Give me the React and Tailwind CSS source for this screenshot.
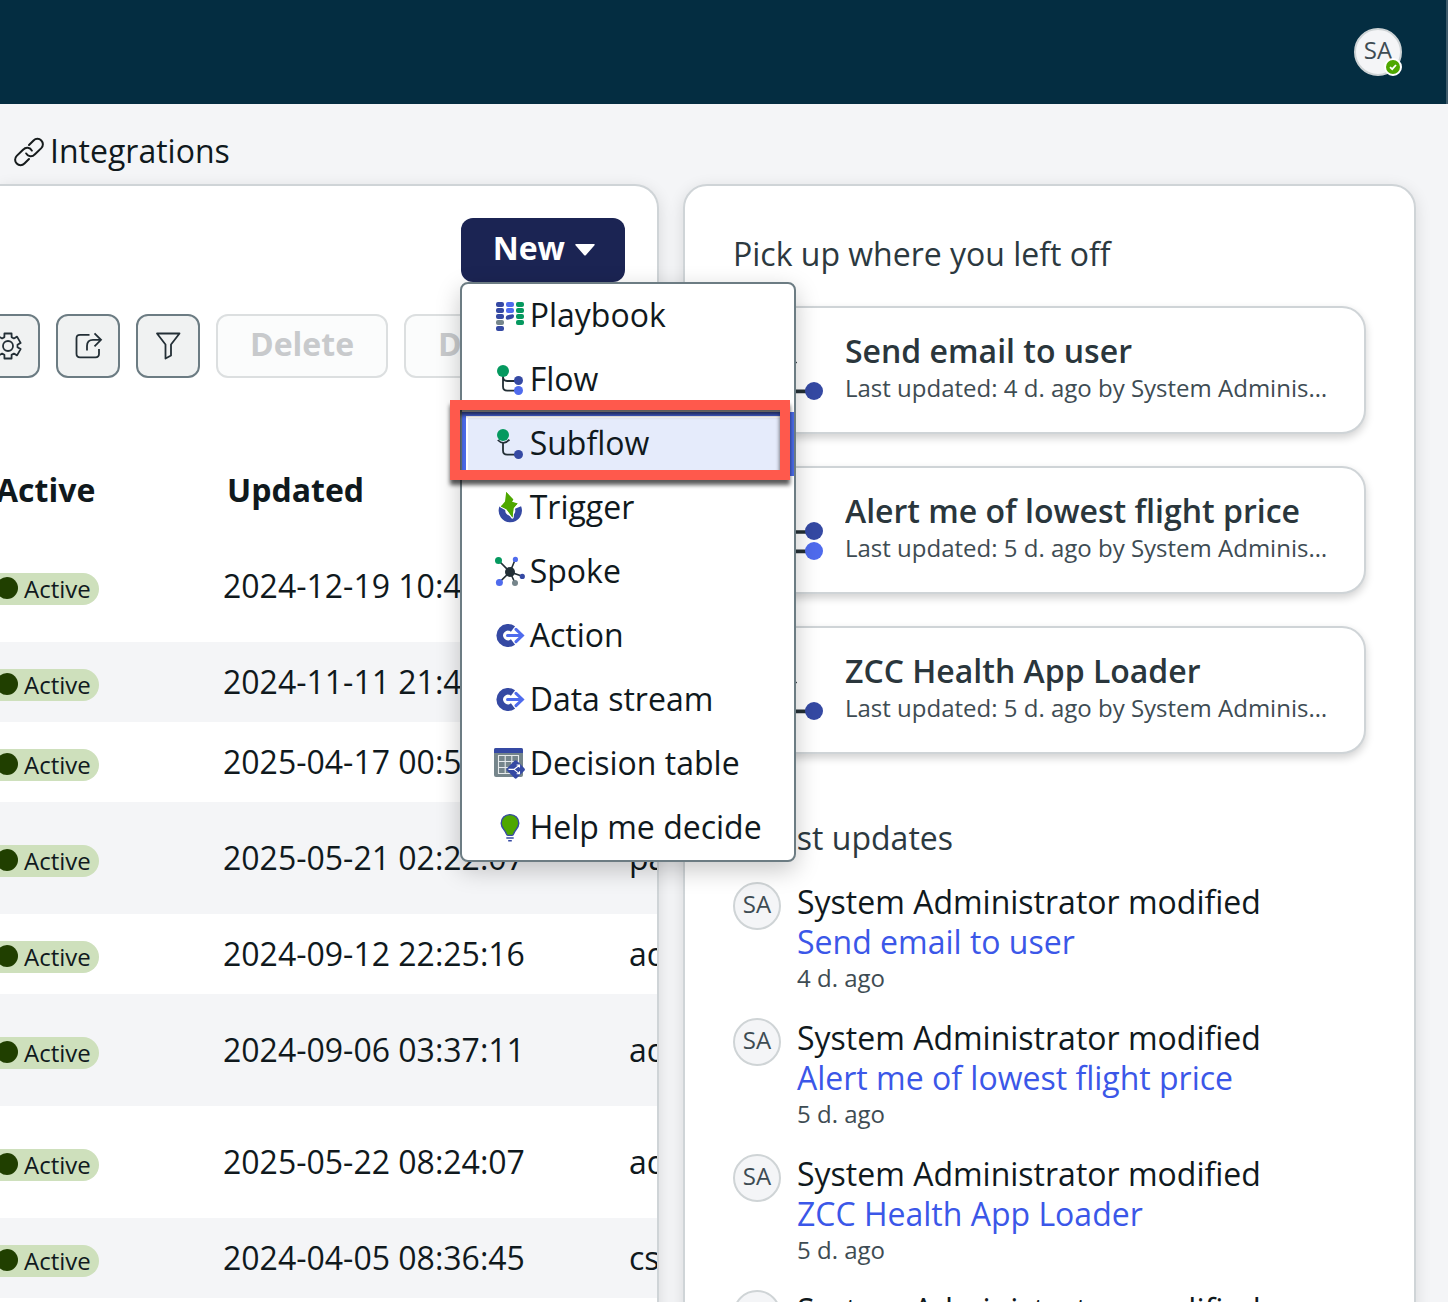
import React from "react";

const NAVY = "#3549a3";
const BLUE = "#4f6bed";
const GREEN = "#05995f";
const LIME = "#4ea700";
const INK = "#232f36";
const GRAY = "#75858b";

function Icon({ children, className = "size-8" }) {
  return (
    <svg viewBox="0 0 32 32" fill="none" className={`${className} shrink-0 overflow-visible`} aria-hidden="true">
      {children}
    </svg>
  );
}

function PlaybookIcon() {
  const dots = [
    [2, 2, NAVY], [2, 8, NAVY], [2, 14, NAVY], [2, 20, GRAY], [2, 26, NAVY],
    [12, 2, BLUE], [12, 8, BLUE],
    [22, 2, GREEN], [22, 8, GREEN], [22, 14, GREEN], [22, 20, GREEN],
  ];
  return (
    <Icon>
      {dots.map(([x, y, c]) => (
        <rect key={`${x}-${y}`} x={x} y={y} width="8" height="5" rx="2" fill={c} />
      ))}
      <path d="M13.5 15.2 L18.6 14.2 Q20.2 14.2 20 16.2 Q19.8 18.2 17.8 18.8 L13.5 19.8 Q11.4 19.6 11.8 17.4 Q12 15.6 13.5 15.2 Z" fill={NAVY} />
    </Icon>
  );
}

function FlowIcon({ className }) {
  return (
    <Icon className={className}>
      <path d="M9 12 V22.5 Q9 26.7 13.2 26.7 H22 M9 12.5 Q9 17 13.2 17 H22" stroke={INK} strokeWidth="1.8" />
      <circle cx="9" cy="7" r="6" fill={GREEN} />
      <circle cx="24.5" cy="16.5" r="4.5" fill={NAVY} />
      <circle cx="24.5" cy="26.5" r="4.5" fill={BLUE} />
    </Icon>
  );
}

function SubflowIcon({ className }) {
  return (
    <Icon className={className}>
      <path d="M9 15 V22.5 Q9 26.7 13.2 26.7 H22 M3.8 12 Q9.5 18 15.4 11.6" stroke={INK} strokeWidth="1.8" />
      <circle cx="9" cy="7" r="6" fill={GREEN} />
      <circle cx="24.5" cy="26.5" r="4.5" fill={NAVY} />
    </Icon>
  );
}

function TriggerIcon() {
  return (
    <Icon>
      <path d="M8.6 15.6 A8.3 8.3 0 1 0 24 15.6" stroke={NAVY} strokeWidth="6.6" />
      <path
        d="M12.2 0 L19.2 7.6 L17.4 11 L23.6 11.4 L19.4 16.4 L18.4 25.4 L12.6 17.4 L6.8 14.2 L12 11 Z"
        fill={LIME}
        stroke="#fff"
        strokeWidth="2.6"
        strokeLinejoin="round"
        paintOrder="stroke"
      />
      <path d="M12.2 0 L19.4 7.6 L17.6 9.4 L23.6 11.4 L19.6 15.6 L18.6 25.6 L12.6 17 L6.8 14.4 L11 9.6 Z" fill={LIME} />
    </Icon>
  );
}

function SpokeIcon() {
  return (
    <Icon>
      <path d="M4.3 4.3 L16 16 L21.3 3.3 M28.3 20.3 L16 16 L5.3 26.3 M16 16 L21 27" stroke={INK} strokeWidth="1.6" />
      <circle cx="16" cy="16" r="5" fill={INK} />
      <circle cx="4.5" cy="4.5" r="3.5" fill={GREEN} />
      <circle cx="21.4" cy="3.4" r="2.6" fill={BLUE} />
      <circle cx="28.3" cy="20.4" r="2.6" fill={NAVY} />
      <circle cx="5.4" cy="26.4" r="3.5" fill={BLUE} />
      <circle cx="21" cy="27" r="3" fill={GRAY} />
    </Icon>
  );
}

function ActionIcon() {
  return (
    <Icon>
      <path d="M19 9 A8.2 8.2 0 1 0 19 22" stroke={NAVY} strokeWidth="6.8" />
      <path d="M14 15.5 H29" stroke="#fff" strokeWidth="4.6" />
      <path d="M22 8.6 L29.2 15.5 L22 22.4" stroke="#fff" strokeWidth="4.4" />
      <path d="M13.5 15.5 H28 M22 9.4 L28.4 15.5 L22 21.6" stroke={BLUE} strokeWidth="3" strokeLinecap="round" />
    </Icon>
  );
}

function DecisionIcon() {
  return (
    <Icon>
      <rect width="29" height="29" rx="2" fill={GRAY} />
      <path d="M2 0 H27 Q29 0 29 2 V5 H0 V2 Q0 0 2 0 Z" fill={NAVY} />
      <path d="M4.5 7.5 H24.5 V25.5 H4.5 Z M11.2 7.5 V25.5 M17.8 7.5 V25.5 M4.5 13.5 H24.5 M4.5 19.5 H24.5" stroke="#e6eaec" strokeWidth="1.1" />
      <rect x="14.7" y="14.4" width="14" height="14" rx="1.8" transform="rotate(45 21.7 21.4)" fill={NAVY} />
      <path d="M14.5 21.4 H20 L25.3 17.2 M20 21.4 L25.3 25.6 M22.6 17 H25.5 V19.6 M22.6 25.8 H25.5 V23.2" stroke="#fff" strokeWidth="1.1" />
    </Icon>
  );
}

function BulbIcon() {
  return (
    <Icon>
      <path
        d="M16 2.6 C10.8 2.6 7.2 6.4 7.2 11.2 C7.2 16 11 17.8 12.2 21.6 Q12.8 23.4 14 23.4 H18 Q19.2 23.4 19.8 21.6 C21 17.8 24.8 16 24.8 11.2 C24.8 6.4 21.2 2.6 16 2.6 Z"
        fill={LIME}
        stroke={NAVY}
        strokeWidth="1.4"
      />
      <path d="M12.3 26 H19.7 M14.2 28.8 H17.8" stroke={NAVY} strokeWidth="1.5" />
    </Icon>
  );
}

function LinkIcon() {
  return (
    <svg viewBox="1.5 1.5 21 21" fill="none" stroke="#161b1c" strokeWidth="1.4" strokeLinecap="round" className="size-[30px]" aria-hidden="true">
      <path d="M10 13a3.6 3.6 0 0 0 6 .7l4.6-4.4a3.6 3.6 0 0 0-5.4-5.4l-3.2 3.2" />
      <path d="M14 11a3.6 3.6 0 0 0-6-.7l-4.6 4.4a3.6 3.6 0 0 0 5.4 5.4l3.2-3.2" />
    </svg>
  );
}

const GEAR_POINTS = [0, 1, 2, 3, 4, 5]
  .flatMap((tooth) =>
    [[-22, 9.6], [-16, 13], [16, 13], [22, 9.6]].map(([offset, radius]) => {
      const angle = ((tooth * 60 - 90 + offset) * Math.PI) / 180;
      return `${(16 + radius * Math.cos(angle)).toFixed(2)},${(16 + radius * Math.sin(angle)).toFixed(2)}`;
    })
  )
  .join(" ");

function GearIcon() {
  return (
    <Icon>
      <polygon points={GEAR_POINTS} stroke={INK} strokeWidth="1.8" strokeLinejoin="round" />
      <circle cx="16" cy="16" r="5" stroke={INK} strokeWidth="1.8" />
    </Icon>
  );
}

function ShareIcon() {
  return (
    <Icon>
      <path d="M17.5 4.8 H8 Q4.5 4.8 4.5 8.3 V23.8 Q4.5 27.3 8 27.3 H23.5 Q27 27.3 27 23.8 V19" stroke={INK} strokeWidth="1.8" />
      <path d="M15 20.5 V16 Q15 9.8 21 9.8 H29 M22.5 3.3 L29 9.8 L22.5 16.3" stroke={INK} strokeWidth="1.8" />
    </Icon>
  );
}

function FunnelIcon() {
  return (
    <Icon>
      <path d="M5 3.5 H27.5 L19 14.5 V25.5 L13.5 28.5 V14.5 Z" stroke={INK} strokeWidth="1.8" strokeLinejoin="round" />
    </Icon>
  );
}

const MENU = [
  ["Playbook", PlaybookIcon],
  ["Flow", FlowIcon],
  ["Subflow", SubflowIcon],
  ["Trigger", TriggerIcon],
  ["Spoke", SpokeIcon],
  ["Action", ActionIcon],
  ["Data stream", ActionIcon],
  ["Decision table", DecisionIcon],
  ["Help me decide", BulbIcon],
];

const ROWS = [
  ["2024-12-19 10:47:12", "", "h-28"],
  ["2024-11-11 21:43:05", "", "h-20"],
  ["2025-04-17 00:52:31", "", "h-20"],
  ["2025-05-21 02:22:07", "pat", "h-28"],
  ["2024-09-12 22:25:16", "admin", "h-20"],
  ["2024-09-06 03:37:11", "admin", "h-28"],
  ["2025-05-22 08:24:07", "admin", "h-28"],
  ["2024-04-05 08:36:45", "cs", "h-20"],
  ["2024-04-05 08:36:45", "cs", "h-20"],
];

const RECENT = [
  ["Send email to user", "4 d. ago", SubflowIcon],
  ["Alert me of lowest flight price", "5 d. ago", FlowIcon],
  ["ZCC Health App Loader", "5 d. ago", SubflowIcon],
];

const UPDATES = [
  ["Send email to user", "4 d. ago"],
  ["Alert me of lowest flight price", "5 d. ago"],
  ["ZCC Health App Loader", "5 d. ago"],
  ["Send email to user", "5 d. ago"],
];

function Avatar() {
  return (
    <span className="flex size-12 shrink-0 items-center justify-center rounded-full border-2 border-[#cfd4d6] bg-[#f4f5f7] pb-1 text-2xl text-[#3e4c53]">
      SA
    </span>
  );
}

function NewMenu() {
  return (
    <div className="relative z-20">
      <button className="flex h-16 items-center gap-2.5 rounded-xl bg-[#1b2453] pr-[30px] pb-1 pl-8 text-[32px] font-bold text-white" aria-expanded="true">
        New
        <svg viewBox="0 0 20 12" className="mt-1 h-3 w-5" aria-hidden="true">
          <path d="M1 0 H19 Q20.4 0 19.5 1.3 L11 11 Q10 12.2 9 11 L0.5 1.3 Q-0.4 0 1 0 Z" fill="#fff" />
        </svg>
      </button>
      <ul role="menu" className="absolute top-16 -left-px w-[336px] rounded-lg border-2 border-[#6c7c83] bg-white shadow-[0_8px_24px_rgba(0,0,0,0.22)]">
        {MENU.map(([label, Glyph]) => {
          const active = label === "Subflow";
          return (
            <li key={label} role="none" className="relative">
              <button
                role="menuitem"
                className={
                  active
                    ? "flex h-16 w-full items-center gap-1 border-4 border-[#4a69e6] bg-[#e5ebfb] px-7 text-[32px] shadow-[inset_0_0_0_2px_#fff]"
                    : "flex h-16 w-full items-center gap-1 px-8 text-[32px]"
                }
              >
                <Glyph />
                <span className="pb-[3px] whitespace-nowrap">{label}</span>
              </button>
              {active && (
                <span className="pointer-events-none absolute -top-3 -left-3 h-20 w-[340px] border-10 border-[#ff594c] drop-shadow-[0_5px_2px_rgba(0,0,0,0.65)]" />
              )}
            </li>
          );
        })}
      </ul>
    </div>
  );
}

function Toolbar() {
  const square = "flex size-16 shrink-0 items-center justify-center rounded-xl border-2 border-[#6c7c83] bg-[#f0f2f2]";
  const text = "h-16 shrink-0 rounded-xl border-2 border-[#dcdfe0] bg-[#fbfcfc] px-8 pb-1 text-[32px] font-bold text-[#c8cacc]";
  return (
    <div className="mt-8 flex gap-4 overflow-hidden">
      <button className={`-ml-6 ${square}`} aria-label="Settings"><GearIcon /></button>
      <button className={square} aria-label="Share"><ShareIcon /></button>
      <button className={square} aria-label="Filter"><FunnelIcon /></button>
      <button className={text} disabled>Delete</button>
      <button className={text} disabled>Deploy</button>
    </div>
  );
}

function FlowTable() {
  return (
    <div className="mt-16 overflow-hidden">
      <table className="w-full table-fixed text-left text-[32px] whitespace-nowrap">
        <thead>
          <tr className="h-22 align-top leading-[96px]">
            <th className="w-[223px] p-0 font-bold"><span className="-ml-1 block h-20">Active</span></th>
            <th className="w-[406px] p-0 pl-1 font-bold"><span className="block h-20">Updated</span></th>
            <th className="p-0" aria-label="Updated by"></th>
          </tr>
        </thead>
        <tbody>
          {ROWS.map(([date, by, height], i) => (
            <tr key={i} className={`${height} ${i % 2 ? "bg-[#f4f5f7]" : "bg-white"}`}>
              <td className="p-0">
                <span className="-ml-3.5 inline-flex h-8 items-center gap-1.5 rounded-full bg-[#cee0bc] pr-2 pl-2.5 align-middle text-2xl">
                  <span className="mb-0.5 size-[22px] rounded-full bg-[#203f00]" />
                  Active
                </span>
              </td>
              <td className="p-0">{date}</td>
              <td className="p-0">{by}</td>
            </tr>
          ))}
        </tbody>
      </table>
    </div>
  );
}

export default function App() {
  return (
    <div className="flex h-screen flex-col overflow-hidden bg-[#f4f5f7] font-['Open_Sans','Noto_Sans',sans-serif] text-[#10191d]">
      <header className="flex h-26 shrink-0 items-center justify-end border-r-2 border-[#3f5b6b] bg-[#042d41] pr-11">
        <div className="relative">
          <Avatar />
          <span className="absolute right-0 bottom-0 flex size-[18px] items-center justify-center rounded-full border-2 border-white bg-[#4ea700]">
            <svg viewBox="0 0 10 10" className="size-2.5" fill="none" aria-hidden="true">
              <path d="M2 5.2 L4.2 7.2 L8 3" stroke="#fff" strokeWidth="1.8" />
            </svg>
          </span>
        </div>
      </header>

      <nav className="flex h-20 shrink-0 items-center px-3.5 pt-4">
        <a href="#integrations" className="flex items-center gap-1.5 text-[32px]">
          <LinkIcon />
          <span className="pb-0.5">Integrations</span>
        </a>
      </nav>

      <main className="flex min-h-0 flex-1 gap-6 pr-8">
        <section className="min-w-0 flex-1 self-start rounded-tr-3xl border-t-2 border-r-2 border-[#cfd4d7] bg-white pt-8 shadow-[0_4px_16px_rgba(0,0,0,0.12)]">
          <div className="flex justify-end pr-8">
            <NewMenu />
          </div>
          <Toolbar />
          <FlowTable />
        </section>

        <aside className="w-[733px] shrink-0 self-start rounded-t-3xl border-2 border-[#cfd4d7] bg-white px-12 pt-12 shadow-[0_4px_16px_rgba(0,0,0,0.12)]">
          <h2 className="text-[32px] leading-10 text-[#2c393f]">Pick up where you left off</h2>
          <div className="mt-8 flex flex-col gap-8">
            {RECENT.map(([title, when, Glyph]) => (
              <a key={title} href="#flow" className="flex h-32 items-center gap-4 rounded-3xl border-2 border-[#cfd4d7] bg-white px-[30px] shadow-[0_4px_8px_rgba(0,0,0,0.18)]">
                <Glyph className="size-16" />
                <span className="block min-w-0 pb-1">
                  <span className="block truncate text-[32px] leading-10 font-semibold text-[#2a363c]">{title}</span>
                  <span className="block truncate text-2xl leading-[34px] text-[#3e4c53]">Last updated: {when} by System Administrator</span>
                </span>
              </a>
            ))}
          </div>
          <h2 className="mt-16 text-[32px] leading-10 text-[#2c393f]">Latest updates</h2>
          <ul className="mt-6 flex flex-col gap-6">
            {UPDATES.map(([title, when], i) => (
              <li key={i} className="flex gap-4">
                <Avatar />
                <div>
                  <p className="text-[32px] leading-10">System Administrator modified</p>
                  <a href="#update" className="block text-[32px] leading-10 text-[#3b57e8]">{title}</a>
                  <p className="text-2xl leading-8 text-[#3e4c53]">{when}</p>
                </div>
              </li>
            ))}
          </ul>
        </aside>
      </main>
    </div>
  );
}
